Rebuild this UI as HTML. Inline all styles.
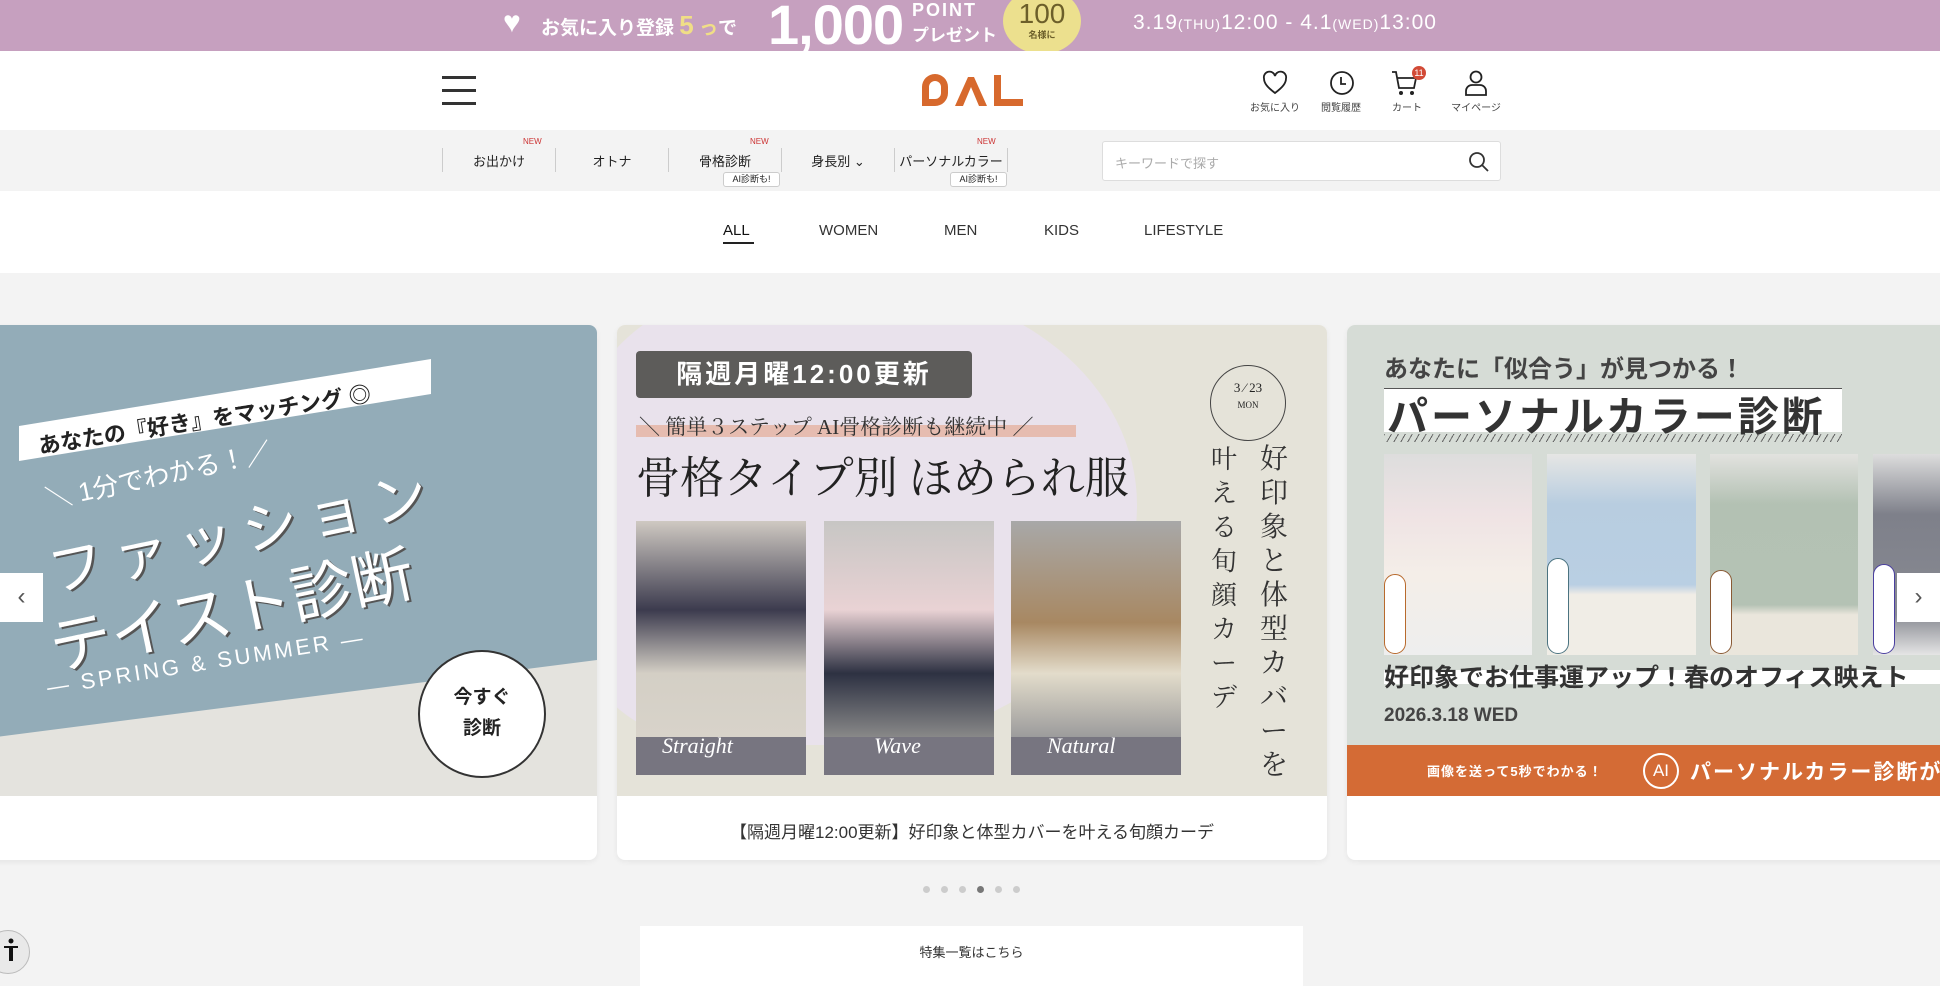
<!DOCTYPE html>
<html><head><meta charset="utf-8"><style>
*{margin:0;padding:0;box-sizing:border-box}
body{width:1940px;height:968px;overflow:hidden;background:#f3f3f3;font-family:"Liberation Sans","Noto Sans CJK JP",sans-serif;color:#222;position:relative}
.abs{position:absolute}
.serif{font-family:"Liberation Serif","Noto Serif CJK SC",serif}
.rot{transform-origin:0 0;white-space:nowrap}
</style></head><body>
<!-- top banner -->
<div class="abs" style="left:0;top:0;width:1940px;height:51px;background:#c6a0bf;overflow:hidden">
 <div class="abs" style="left:503px;top:9px;width:30px;height:28px;color:#fff;font-size:30px;line-height:28px">♥</div>
 <div class="abs" style="left:541px;top:10px;color:#fff;font-size:19px;font-weight:bold;white-space:nowrap">お気に入り登録 <span style="color:#f0de86;font-size:26px">5</span> <span style="color:#f0de86">っ</span>で</div>
 <div class="abs" style="left:768px;top:-8px;color:#fff;font-size:56px;font-weight:bold;letter-spacing:-1px">1,000</div>
 <div class="abs" style="left:912px;top:0px;color:#fff;font-size:18px;font-weight:bold;letter-spacing:2px">POINT</div>
 <div class="abs" style="left:912px;top:21px;color:#fff;font-size:17px;font-weight:bold">プレゼント</div>
 <div class="abs" style="left:1003px;top:-12px;width:78px;height:66px;border-radius:50%;background:#ece08e;color:#6c5f2a;text-align:center">
  <div style="font-size:28px;margin-top:12px;line-height:28px">100</div><div style="font-size:9px;font-weight:bold">名様に</div></div>
 <div class="abs" style="left:1133px;top:11px;color:#fff;font-size:21px;letter-spacing:1px;white-space:nowrap">3.19<span style="font-size:14px">(THU)</span>12:00 - 4.1<span style="font-size:14px">(WED)</span>13:00</div>
</div>
<!-- header -->
<div class="abs" style="left:0;top:51px;width:1940px;height:79px;background:#fff">
 <div class="abs" style="left:442px;top:25px;width:34px;height:3px;background:#333"></div>
 <div class="abs" style="left:442px;top:38px;width:34px;height:3px;background:#333"></div>
 <div class="abs" style="left:442px;top:51px;width:34px;height:3px;background:#333"></div>
 <svg class="abs" style="left:919px;top:22px" width="106" height="34" viewBox="0 0 106 34">
  <path d="M3 33 V14 A13 13 0 0 1 29 14 V20 A13 13 0 0 1 16 33 Z M10 26 V14 A6 6 0 0 1 22 14 V20 A6 6 0 0 1 16 26 Z" fill="#d7692d" fill-rule="evenodd"/>
  <path d="M36 33 L49 4 H55 L68 33 H60 L52 14 L44 33 Z" fill="#d7692d"/>
  <path d="M75 2 H82 V26 H104 V33 H75 Z" fill="#d7692d"/>
 </svg>
 <svg class="abs" style="left:1261px;top:19px" width="28" height="26" viewBox="0 0 28 26"><path d="M14 23 C6 17 3 13 3 8.5 A5.5 5.5 0 0 1 14 6 A5.5 5.5 0 0 1 25 8.5 C25 13 22 17 14 23 Z" fill="none" stroke="#222" stroke-width="1.8"/></svg>
 <svg class="abs" style="left:1328px;top:18px" width="28" height="28" viewBox="0 0 28 28"><circle cx="14" cy="14" r="11" fill="none" stroke="#222" stroke-width="1.8"/><path d="M13 8 V15 H18" fill="none" stroke="#222" stroke-width="1.8"/></svg>
 <svg class="abs" style="left:1390px;top:18px" width="30" height="28" viewBox="0 0 30 28"><path d="M2 3 H6 L9 19 H24 L26 9 H7" fill="none" stroke="#222" stroke-width="1.8"/><circle cx="11" cy="24" r="2" fill="#222"/><circle cx="22" cy="24" r="2" fill="#222"/></svg>
 <div class="abs" style="left:1412px;top:15px;width:14px;height:14px;border-radius:50%;background:#d24a36;color:#fff;font-size:9px;text-align:center;line-height:14px">11</div>
 <svg class="abs" style="left:1462px;top:18px" width="28" height="28" viewBox="0 0 28 28"><circle cx="14" cy="8" r="5.5" fill="none" stroke="#222" stroke-width="1.8"/><path d="M4 26 V22 A6 6 0 0 1 10 16 H18 A6 6 0 0 1 24 22 V26 Z" fill="none" stroke="#222" stroke-width="1.8"/></svg>
 <div class="abs" style="left:1245px;top:48px;width:60px;text-align:center;font-size:10px;color:#444">お気に入り</div>
 <div class="abs" style="left:1311px;top:48px;width:60px;text-align:center;font-size:10px;color:#444">閲覧履歴</div>
 <div class="abs" style="left:1377px;top:48px;width:60px;text-align:center;font-size:10px;color:#444">カート</div>
 <div class="abs" style="left:1446px;top:48px;width:60px;text-align:center;font-size:10px;color:#444">マイページ</div>
</div>
<!-- nav -->
<div class="abs" style="left:0;top:130px;width:1940px;height:61px;background:#f3f3f3">
 <div class="abs" style="left:442px;top:18px;width:1px;height:24px;background:#ccc"></div>
 <div class="abs" style="left:555px;top:18px;width:1px;height:24px;background:#ccc"></div>
 <div class="abs" style="left:668px;top:18px;width:1px;height:24px;background:#ccc"></div>
 <div class="abs" style="left:781px;top:18px;width:1px;height:24px;background:#ccc"></div>
 <div class="abs" style="left:894px;top:18px;width:1px;height:24px;background:#ccc"></div>
 <div class="abs" style="left:1007px;top:18px;width:1px;height:24px;background:#ccc"></div>
 <div class="abs" style="left:443px;top:21px;width:112px;text-align:center;font-size:13px">お出かけ</div>
 <div class="abs" style="left:556px;top:21px;width:112px;text-align:center;font-size:13px">オトナ</div>
 <div class="abs" style="left:669px;top:21px;width:112px;text-align:center;font-size:13px">骨格診断</div>
 <div class="abs" style="left:782px;top:21px;width:112px;text-align:center;font-size:13px">身長別 ⌄</div>
 <div class="abs" style="left:895px;top:21px;width:112px;text-align:center;font-size:13px">パーソナルカラー</div>
 <div class="abs" style="left:523px;top:7px;font-size:8px;color:#c33">NEW</div>
 <div class="abs" style="left:750px;top:7px;font-size:8px;color:#c33">NEW</div>
 <div class="abs" style="left:977px;top:7px;font-size:8px;color:#c33">NEW</div>
 <div class="abs" style="left:723px;top:42px;width:57px;height:15px;background:#fff;border:1px solid #ccc;border-radius:3px;font-size:9px;text-align:center;line-height:13px">AI診断も!</div>
 <div class="abs" style="left:950px;top:42px;width:57px;height:15px;background:#fff;border:1px solid #ccc;border-radius:3px;font-size:9px;text-align:center;line-height:13px">AI診断も!</div>
 <div class="abs" style="left:1102px;top:11px;width:399px;height:40px;background:#fff;border:1px solid #ddd;border-radius:3px">
  <div class="abs" style="left:12px;top:11px;font-size:13px;color:#aaa">キーワードで探す</div>
  <svg class="abs" style="left:365px;top:9px" width="22" height="22" viewBox="0 0 22 22"><circle cx="9" cy="9" r="7" fill="none" stroke="#333" stroke-width="1.8"/><path d="M14 14 L20 20" stroke="#333" stroke-width="1.8"/></svg>
 </div>
</div>
<!-- tabs -->
<div class="abs" style="left:0;top:191px;width:1940px;height:82px;background:#fff">
 <div class="abs" style="left:723px;top:31px;font-size:15px;color:#111">ALL</div>
 <div class="abs" style="left:723px;top:51px;width:31px;height:2px;background:#222"></div>
 <div class="abs" style="left:819px;top:31px;font-size:15px;color:#333">WOMEN</div>
 <div class="abs" style="left:944px;top:31px;font-size:15px;color:#333">MEN</div>
 <div class="abs" style="left:1044px;top:31px;font-size:15px;color:#333">KIDS</div>
 <div class="abs" style="left:1144px;top:31px;font-size:15px;color:#333">LIFESTYLE</div>
</div>
<!-- card 1 -->
<div class="abs" style="left:-20px;top:325px;width:617px;height:535px;background:#fff;border-radius:8px;overflow:hidden;box-shadow:0 2px 6px rgba(0,0,0,.06)">
 <div class="abs" style="left:0;top:0;width:617px;height:471px;background:#93acb8;overflow:hidden">
  <svg class="abs" style="left:0;top:0" width="617" height="471" viewBox="0 0 617 471">
   <polygon points="0,414 617,335 617,471 0,471" fill="#e4e3de"/>
   <polygon points="39,101 451,34 451,69 39,136" fill="#fff"/>
  </svg>
  <div class="abs rot" style="left:56px;top:104px;font-size:22px;font-weight:bold;color:#222;transform:rotate(-9deg)">あなたの『好き』をマッチング ◎</div>
  <div class="abs rot" style="left:62px;top:155px;font-size:26px;color:#fff;transform:rotate(-12deg)">＼ 1分でわかる！／</div>
  <div class="abs rot" style="left:60px;top:205px;font-size:56px;color:#fff;transform:rotate(-12deg);letter-spacing:10px;text-shadow:2px 2px 0 #555">ファッション</div>
  <div class="abs rot" style="left:60px;top:275px;font-size:62px;color:#fff;transform:rotate(-12deg);text-shadow:2px 2px 0 #555">テイスト診断</div>
  <div class="abs rot" style="left:65px;top:350px;font-size:22px;color:#fff;transform:rotate(-9deg);letter-spacing:3px">— SPRING &amp; SUMMER —</div>
  <div class="abs" style="left:438px;top:325px;width:128px;height:128px;border-radius:50%;background:#fff;border:2px solid #333;text-align:center;font-size:19px;font-weight:bold;line-height:31px;padding-top:30px">今すぐ<br>診断</div>
 </div>
</div>
<!-- card 2 -->
<div class="abs" style="left:617px;top:325px;width:710px;height:535px;background:#fff;border-radius:8px;overflow:hidden;box-shadow:0 2px 6px rgba(0,0,0,.06)">
 <div class="abs" style="left:0;top:0;width:710px;height:471px;background:#e5e3d9;overflow:hidden">
  <div class="abs" style="left:-40px;top:-40px;width:560px;height:460px;background:#e9e2ec;border-radius:40% 55% 60% 30%"></div>
  <div class="abs" style="left:19px;top:26px;width:336px;height:47px;background:#5d5c5a;border-radius:4px;color:#fff;font-size:26px;font-weight:bold;text-align:center;line-height:47px;letter-spacing:3px">隔週月曜12:00更新</div>
  <div class="abs" style="left:19px;top:100px;width:440px;height:12px;background:#e6bcb0"></div>
  <div class="abs serif" style="left:22px;top:86px;font-size:21px;color:#333;white-space:nowrap">＼ 簡単３ステップ AI骨格診断も継続中 ／</div>
  <div class="abs serif" style="left:19px;top:117px;font-size:44px;color:#222;white-space:nowrap">骨格タイプ別 ほめられ服</div>
  <div class="abs" style="left:19px;top:196px;width:170px;height:254px;background:linear-gradient(#cfc9c2 0,#3c3b4e 35%,#d4cfc5 60%,#d8d3ca 85%,#777580 85%)"></div>
  <div class="abs" style="left:207px;top:196px;width:170px;height:254px;background:linear-gradient(#c7c6c4 0,#e9d2d4 35%,#2d3142 60%,#888 85%,#777580 85%)"></div>
  <div class="abs" style="left:394px;top:196px;width:170px;height:254px;background:linear-gradient(#a8a8a8 0,#a88862 40%,#e3dccb 60%,#9c9c9c 85%,#777580 85%)"></div>
  <div class="abs serif" style="left:45px;top:408px;font-size:22px;color:#fff;font-style:italic">Straight</div>
  <div class="abs serif" style="left:257px;top:408px;font-size:22px;color:#fff;font-style:italic">Wave</div>
  <div class="abs serif" style="left:430px;top:408px;font-size:22px;color:#fff;font-style:italic">Natural</div>
  <div class="abs serif" style="left:593px;top:40px;width:76px;height:76px;border-radius:50%;border:1px solid #444;text-align:center;font-size:13px;padding-top:14px;line-height:16px">3 ⁄ 23<br><span style="font-size:9px">MON</span></div>
  <div class="abs serif" style="left:643px;top:118px;width:30px;font-size:28px;line-height:34px;color:#333">好印象と体型カバーを</div>
  <div class="abs serif" style="left:594px;top:118px;width:30px;font-size:26px;line-height:34px;color:#333">叶える旬顔カーデ</div>
 </div>
 <div class="abs" style="left:0;top:493px;width:710px;text-align:center;font-size:17px;color:#333">【隔週月曜12:00更新】好印象と体型カバーを叶える旬顔カーデ</div>
</div>
<!-- card 3 -->
<div class="abs" style="left:1347px;top:325px;width:620px;height:535px;background:#fff;border-radius:8px;overflow:hidden;box-shadow:0 2px 6px rgba(0,0,0,.06)">
 <div class="abs" style="left:0;top:0;width:620px;height:471px;background:#d6dcd6;overflow:hidden">
  <div class="abs" style="left:37px;top:24px;font-size:24px;font-weight:bold;color:#444;white-space:nowrap">あなたに「似合う」が見つかる！</div>
  <div class="abs" style="left:37px;top:63px;width:458px;height:44px;background:#fff;border-top:1px solid #555"></div>
  <div class="abs" style="left:40px;top:58px;font-size:41px;font-weight:bold;color:#333;white-space:nowrap;letter-spacing:3px">パーソナルカラー診断</div>
  <div class="abs" style="left:37px;top:109px;width:458px;height:8px;background:repeating-linear-gradient(120deg,#666 0 1px,transparent 1px 6px)"></div>
  <div class="abs" style="left:37px;top:129px;width:148px;height:201px;background:linear-gradient(#ddd 0,#efe3e4 30%,#f4eee8 60%,#eee 100%)"></div>
  <div class="abs" style="left:200px;top:129px;width:149px;height:201px;background:linear-gradient(#e6e6e4 0,#b8cde0 25%,#b9cfe3 65%,#f0ede6 70%)"></div>
  <div class="abs" style="left:363px;top:129px;width:148px;height:201px;background:linear-gradient(#e2e2df 0,#b3c1b3 25%,#b4c2b4 75%,#eae6dc 80%)"></div>
  <div class="abs" style="left:526px;top:129px;width:120px;height:201px;background:linear-gradient(#ddd 0,#7e808a 30%,#888a92 80%,#e5e5e5)"></div>
  <div class="abs" style="left:37px;top:249px;width:22px;height:80px;border:1px solid #b86a2d;border-radius:11px;background:#fff"></div>
  <div class="abs" style="left:200px;top:233px;width:22px;height:96px;border:1px solid #4b7380;border-radius:11px;background:#fff"></div>
  <div class="abs" style="left:363px;top:245px;width:22px;height:84px;border:1px solid #8a5a35;border-radius:11px;background:#fff"></div>
  <div class="abs" style="left:526px;top:239px;width:22px;height:90px;border:1px solid #4a3fa0;border-radius:11px;background:#fff"></div>
  <div class="abs" style="left:37px;top:345px;width:600px;height:14px;background:#fff"></div>
  <div class="abs" style="left:37px;top:333px;font-size:25px;font-weight:bold;color:#333;white-space:nowrap">好印象でお仕事運アップ！春のオフィス映えト</div>
  <div class="abs" style="left:37px;top:380px;font-size:19px;font-weight:bold;color:#444">2026.3.18 WED</div>
  <div class="abs" style="left:0;top:420px;width:620px;height:51px;background:#d46b35">
   <div class="abs" style="left:80px;top:16px;font-size:13px;color:#fff;font-weight:bold;white-space:nowrap;letter-spacing:1px">画像を送って5秒でわかる！</div>
   <div class="abs" style="left:296px;top:8px;width:36px;height:36px;border-radius:50%;border:2px solid #fff;color:#fff;font-size:17px;text-align:center;line-height:32px">AI</div>
   <div class="abs" style="left:343px;top:11px;font-size:21px;color:#fff;font-weight:bold;white-space:nowrap;letter-spacing:2px">パーソナルカラー診断が登</div>
  </div>
 </div>
</div>
<!-- arrows -->
<div class="abs" style="left:0;top:573px;width:43px;height:49px;background:#fff;font-size:24px;line-height:47px;text-align:center;color:#555">‹</div>
<div class="abs" style="left:1897px;top:573px;width:43px;height:49px;background:#fff;font-size:24px;line-height:47px;text-align:center;color:#555">›</div>
<!-- dots -->
<div class="abs" style="left:923px;top:886px;width:7px;height:7px;border-radius:50%;background:#ccc"></div>
<div class="abs" style="left:941px;top:886px;width:7px;height:7px;border-radius:50%;background:#ccc"></div>
<div class="abs" style="left:959px;top:886px;width:7px;height:7px;border-radius:50%;background:#ccc"></div>
<div class="abs" style="left:977px;top:886px;width:7px;height:7px;border-radius:50%;background:#777"></div>
<div class="abs" style="left:995px;top:886px;width:7px;height:7px;border-radius:50%;background:#ccc"></div>
<div class="abs" style="left:1013px;top:886px;width:7px;height:7px;border-radius:50%;background:#ccc"></div>
<!-- button -->
<div class="abs" style="left:640px;top:926px;width:663px;height:60px;background:#fff;text-align:center;font-size:13px;color:#333;padding-top:16px">特集一覧はこちら</div>
<!-- accessibility -->
<div class="abs" style="left:-14px;top:930px;width:44px;height:44px;border-radius:50%;background:#e9e9e9;border:1px solid #bbb"></div>
<svg class="abs" style="left:3px;top:938px" width="16" height="24" viewBox="0 0 16 24"><circle cx="8" cy="3" r="2.5" fill="#111"/><path d="M1 8 H15 V10 H10 V23 H6 V10 H1 Z" fill="#111"/></svg>
</body></html>
